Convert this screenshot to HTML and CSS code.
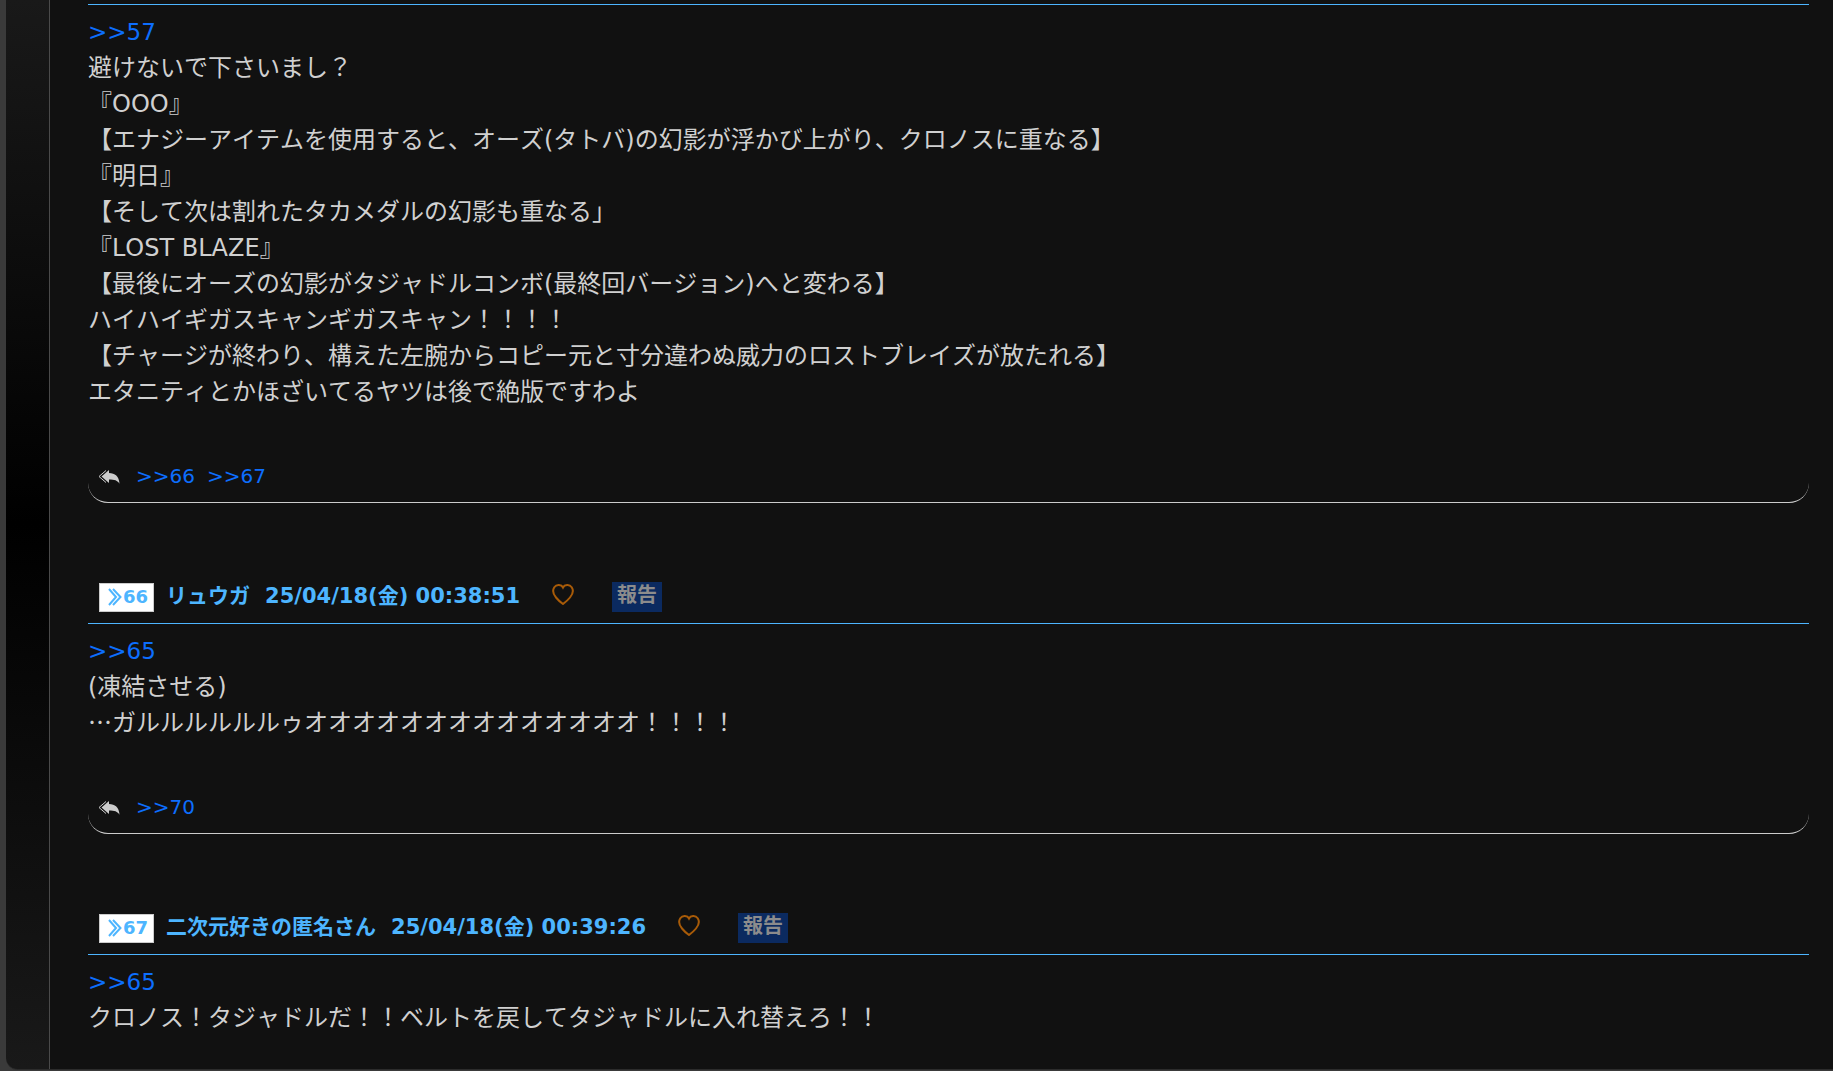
FILE: index.html
```html
<!DOCTYPE html>
<html lang="ja">
<head>
<meta charset="utf-8">
<title>スレッド</title>
<link rel="stylesheet" href="styles.css">
</head>
<body>
<div class="shell">
<main class="thread">
  <article class="post">
    <div class="post-body">
      <p><a href="#p57">&gt;&gt;57</a></p>
      <p>避けないで下さいまし？</p>
      <p>『OOO』</p>
      <p>【エナジーアイテムを使用すると、オーズ(タトバ)の幻影が浮かび上がり、クロノスに重なる】</p>
      <p>『明日』</p>
      <p>【そして次は割れたタカメダルの幻影も重なる」</p>
      <p>『LOST BLAZE』</p>
      <p>【最後にオーズの幻影がタジャドルコンボ(最終回バージョン)へと変わる】</p>
      <p>ハイハイギガスキャンギガスキャン！！！！</p>
      <p>【チャージが終わり、構えた左腕からコピー元と寸分違わぬ威力のロストブレイズが放たれる】</p>
      <p>エタニティとかほざいてるヤツは後で絶版ですわよ</p>
    </div>
    <footer class="replies">
      <svg class="reply-icon" viewBox="0 0 22 14" aria-hidden="true"><path class="line" d="M8 .5 1 6.500 8 12.500"/><path d="M3.500 6.500 11 0v3c6 .2 10 3 10.500 10.800-2-3.500-5-4.300-10.500-4.300V13z"/></svg>
      <a href="#p66">&gt;&gt;66</a>
      <a href="#p67">&gt;&gt;67</a>
    </footer>
  </article>

  <article class="post" id="p66">
    <header class="post-head">
      <button class="num" type="button"><svg viewBox="0 0 14 18" aria-hidden="true"><path d="M1 1 8 9 1 17M5 1l7.500 8L5 17"/></svg>66</button>
      <span class="name">リュウガ</span>
      <time class="date">25/04/18(金) 00:38:51</time>
      <button class="like" type="button" aria-label="いいね"><svg viewBox="0 0 22 21" aria-hidden="true"><path d="M11 3.500C9.500.5 4.500 0 2.300 3.200.2 6.500 1.500 10.500 4 13.500c2 2.500 5 5 7 6.500 2-1.500 5-4 7-6.500 2.500-3 3.800-7 1.700-10.300C17.500 0 12.500.5 11 3.500z"/></svg></button>
      <button class="report" type="button">報告</button>
    </header>
    <div class="post-body">
      <p><a href="#p65">&gt;&gt;65</a></p>
      <p>(凍結させる)</p>
      <p><span class="wide">…</span>ガルルルルルルゥオオオオオオオオオオオオオオ！！！！</p>
    </div>
    <footer class="replies">
      <svg class="reply-icon" viewBox="0 0 22 14" aria-hidden="true"><path class="line" d="M8 .5 1 6.500 8 12.500"/><path d="M3.500 6.500 11 0v3c6 .2 10 3 10.500 10.800-2-3.500-5-4.300-10.500-4.300V13z"/></svg>
      <a href="#p70">&gt;&gt;70</a>
    </footer>
  </article>

  <article class="post" id="p67">
    <header class="post-head">
      <button class="num" type="button"><svg viewBox="0 0 14 18" aria-hidden="true"><path d="M1 1 8 9 1 17M5 1l7.500 8L5 17"/></svg>67</button>
      <span class="name">二次元好きの匿名さん</span>
      <time class="date">25/04/18(金) 00:39:26</time>
      <button class="like" type="button" aria-label="いいね"><svg viewBox="0 0 22 21" aria-hidden="true"><path d="M11 3.500C9.500.5 4.500 0 2.300 3.200.2 6.500 1.500 10.500 4 13.500c2 2.500 5 5 7 6.500 2-1.500 5-4 7-6.500 2.500-3 3.800-7 1.700-10.300C17.500 0 12.500.5 11 3.500z"/></svg></button>
      <button class="report" type="button">報告</button>
    </header>
    <div class="post-body">
      <p><a href="#p65">&gt;&gt;65</a></p>
      <p>クロノス！タジャドルだ！！ベルトを戻してタジャドルに入れ替えろ！！</p>
    </div>
  </article>
</main>
</div>
</body>
</html>
```

FILE: styles.css
```css
* { box-sizing: border-box; }

body {
  margin: 0;
  padding: 0 0 1px 6px;
  background: #3a3a3a;
  color: #d0d0d0;
  font-family: "DejaVu Sans", "Noto Sans CJK JP", sans-serif;
  font-size: 24px;
  font-kerning: none;
  line-height: 36px;
}

a { color: #0d6efd; text-decoration: none; }
p { margin: 0; }

button {
  margin: 0;
  padding: 0;
  border: 0;
  background: none;
  font: inherit;
}

.shell {
  padding-left: 43px;
  border-bottom: 1px solid #2c2c2c;
  border-bottom-left-radius: 12px;
  background: linear-gradient(#191919, #000 49%, #191919);
}

.thread {
  padding: 4px 24px 33px 38px;
  border-left: 1px solid #4a4a4a;
  background: #111;
}

.post + .post { margin-top: 70px; }

.post-body {
  padding-top: 9px;
  border-top: 1px solid #4db5ff;
}

.post-body a { font-size: 23px; }

.wide {
  font-family: "Noto Sans CJK JP", sans-serif;
  line-height: 24px;
}

.post-head {
  display: flex;
  align-items: center;
  height: 50px;
  padding: 0 0 5px 11px;
  color: #4db5ff;
  font-size: 21px;
  font-weight: bold;
}

.num {
  display: flex;
  align-items: center;
  gap: 1px;
  height: 29px;
  margin-top: 3px;
  padding: 0 5px 0 8px;
  border: 1px solid #ccc;
  background: #fff;
  color: #4db5ff;
  font-size: 18px;
}

.num svg { width: 14px; height: 18px; }
.num path { fill: none; stroke: currentColor; stroke-width: 2; }
.name { margin-left: 12px; }
.date { margin-left: 15px; }
.like { display: flex; margin: 0 0 3px 32px; }
.like svg { width: 22px; height: 21px; }
.like path { fill: none; stroke: #a85b08; stroke-width: 2; }

.report {
  height: 30px;
  margin: 2px 0 0 38px;
  padding: 0 5px 4px;
  background: #0b2a60;
  color: #8c8c8c;
  font-size: 20px;
  line-height: 26px;
}

.replies {
  display: flex;
  align-items: center;
  gap: 12px;
  height: 54px;
  margin-top: 39px;
  padding: 1px 10px 0;
  border-bottom: 1px solid #ccc;
  border-radius: 0 0 20px 20px;
  font-size: 20px;
}

.reply-icon { width: 22px; height: 14px; margin: 2px 4px 0 0; fill: #ccc; }
.reply-icon .line { fill: none; stroke: #ccc; stroke-width: 1; }
```
